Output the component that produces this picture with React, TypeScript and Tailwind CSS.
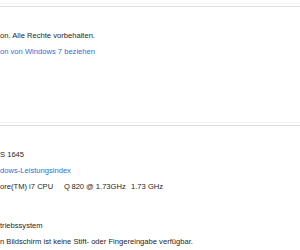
import React from 'react';

function Row({ children, link = false }: { children: React.ReactNode; link?: boolean }) {
  return (
    <div
      className={`h-[16px] leading-[16px] whitespace-nowrap ${
        link ? 'text-[#2f6fce]' : 'text-[#262626]'
      }`}
    >
      {children}
    </div>
  );
}

function Separator() {
  return (
    <div>
      <div className="h-px bg-[#f3f3f3]" />
      <div className="h-[2px]" />
      <div className="h-px bg-[#dedede]" />
    </div>
  );
}

export default function App() {
  return (
    <div
      className="w-[300px] h-[250px] overflow-hidden bg-white text-[7.6px]"
      style={{ fontFamily: '"Liberation Sans", Arial, sans-serif' }}
    >
      <div className="h-[3px]" />
      <Separator />

      {/* Windows-Edition */}
      <div className="mt-[21px]">
        <Row>on. Alle Rechte vorbehalten.</Row>
        <Row link>on von Windows 7 beziehen</Row>
      </div>

      <div className="h-[62px]" />
      <Separator />

      {/* System */}
      <div className="mt-[21px]">
        <Row>S 1645</Row>
        <Row link>dows-Leistungsindex</Row>
        <Row>
          <span className="inline-block w-[64px]">ore(TM) i7 CPU</span>
          <span className="inline-block w-[20px] tracking-[-0.2px]">Q 820</span>
          <span className="inline-block w-[47px] pl-[2px]">@ 1.73GHz</span>
          <span>1.73 GHz</span>
        </Row>
      </div>

      <div className="mt-[23px]">
        <Row>triebssystem</Row>
        <Row>n Bildschirm ist keine Stift- oder Fingereingabe verfügbar.</Row>
      </div>
    </div>
  );
}
